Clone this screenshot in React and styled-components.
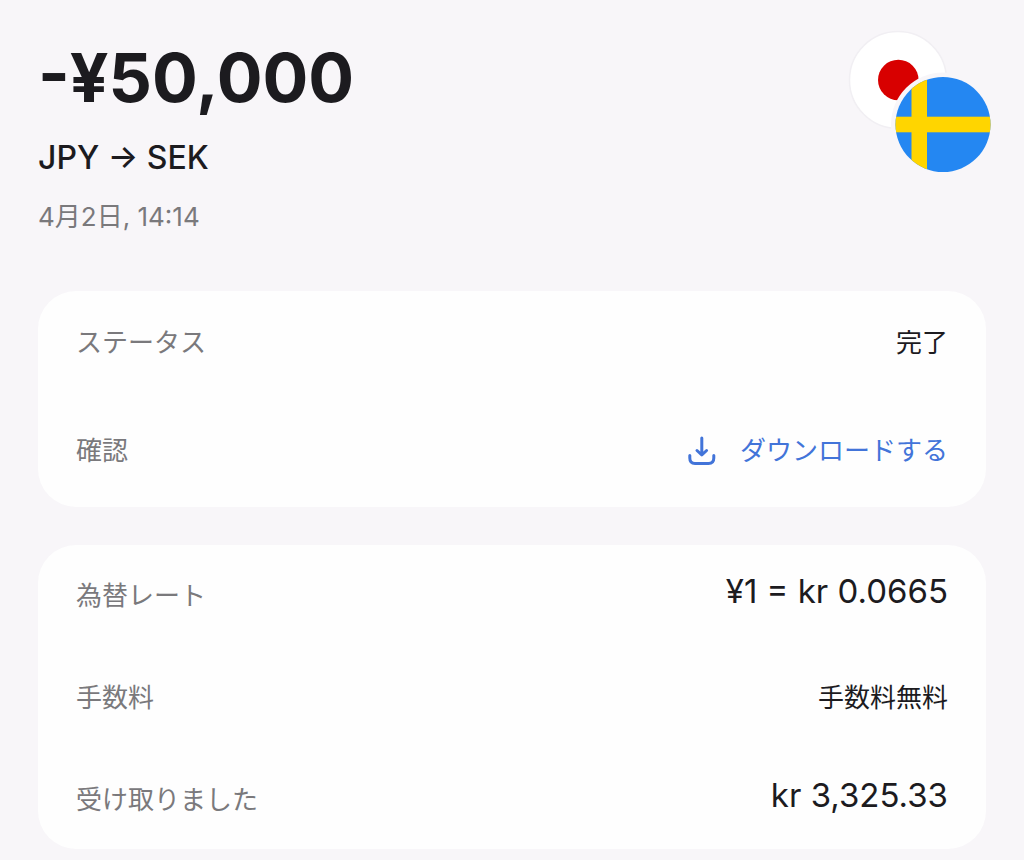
import styled, { createGlobalStyle } from "styled-components";

const GlobalStyle = createGlobalStyle`
  * {
    box-sizing: border-box;
  }

  body {
    margin: 0;
    background-color: #f8f6f9;
    color: #1c1b1f;
    font-family: "Inter", "Noto Sans CJK JP", sans-serif;
  }
`;

const Page = styled.main`
  display: flex;
  flex-direction: column;
  gap: 38px;
  padding: 30px 38px 11px;
`;

const Header = styled.header`
  display: flex;
  justify-content: space-between;
  align-items: flex-start;
  height: 223px;
  margin-right: -6px;
`;

const Summary = styled.div`
  display: flex;
  flex-direction: column;
`;

const Amount = styled.h1`
  margin: 0;
  font-size: 68px;
  font-weight: 700;
  line-height: 94px;
`;

const Pair = styled.p`
  margin: 0;
  font-size: 32px;
  font-weight: 500;
  line-height: 68px;
`;

const DateText = styled.time`
  color: #7a797c;
  font-size: 26px;
  line-height: 50px;
`;

const Flags = styled.svg`
  flex: none;
  width: 144px;
  height: 144px;
`;

const Card = styled.dl`
  margin: 0;
  padding: ${({ $padding }) => $padding};
  display: flex;
  flex-direction: column;
  gap: ${({ $gap }) => $gap};
  border-radius: 38px;
  background-color: #fefefe;
`;

const Row = styled.div`
  display: flex;
  justify-content: space-between;
  align-items: flex-start;
`;

const Label = styled.dt`
  color: #7a797c;
  font-size: 26px;
  line-height: 36px;
`;

const Value = styled.dd`
  margin: 0;
  font-size: ${({ $large }) => ($large ? "33px" : "26px")};
  line-height: ${({ $large }) => ($large ? "26px" : "36px")};
`;

const DownloadButton = styled.button`
  display: flex;
  align-items: center;
  gap: 24px;
  padding: 0;
  border: none;
  background: none;
  color: #4274d9;
  font: inherit;
  cursor: pointer;
`;

const DownloadIcon = () => (
  <svg width="28" height="30" viewBox="0 0 28 30" fill="none" aria-hidden="true">
    <path
      d="M13.8 2V18.5M9 14.5L13.8 19L18.6 14.5M1.8 19.6V22C1.8 25.5 3.5 27.4 7 27.4H20.5C24 27.4 25.8 25.5 25.8 22V19.6"
      stroke="currentColor"
      strokeWidth="3"
      strokeLinecap="round"
      strokeLinejoin="round"
    />
  </svg>
);

const CurrencyFlags = () => (
  <Flags viewBox="0 0 144 144" role="img" aria-label="JPY SEK">
    <defs>
      <clipPath id="sweden">
        <circle cx="95" cy="94.5" r="47.5" />
      </clipPath>
    </defs>
    <circle cx="50" cy="50" r="48.5" fill="#fff" stroke="#f1eff3" strokeWidth="1.5" />
    <circle cx="50.3" cy="50" r="20.3" fill="#d80000" />
    <circle cx="95" cy="94.5" r="52" fill="#f8f6f9" />
    <g clipPath="url(#sweden)">
      <rect x="47" y="46" width="96" height="97" fill="#2487f2" />
      <rect x="63.5" y="46" width="15.5" height="97" fill="#ffd500" />
      <rect x="47" y="86.7" width="96" height="15.6" fill="#ffd500" />
    </g>
  </Flags>
);

const App = () => {
  return (
    <>
      <GlobalStyle />
      <Page>
        <Header>
          <Summary>
            <Amount>-¥50,000</Amount>
            <Pair>JPY → SEK</Pair>
            <DateText>4月2日, 14:14</DateText>
          </Summary>
          <CurrencyFlags />
        </Header>

        <Card $padding="34px 38px 38px" $gap="72px">
          <Row>
            <Label>ステータス</Label>
            <Value>完了</Value>
          </Row>
          <Row>
            <Label>確認</Label>
            <Value>
              <DownloadButton type="button">
                <DownloadIcon />
                ダウンロードする
              </DownloadButton>
            </Value>
          </Row>
        </Card>

        <Card $padding="33px 38px 31px" $gap="66px">
          <Row>
            <Label>為替レート</Label>
            <Value $large>¥1 = kr 0.0665</Value>
          </Row>
          <Row>
            <Label>手数料</Label>
            <Value>手数料無料</Value>
          </Row>
          <Row>
            <Label>受け取りました</Label>
            <Value $large>kr 3,325.33</Value>
          </Row>
        </Card>
      </Page>
    </>
  );
};

export default App;
